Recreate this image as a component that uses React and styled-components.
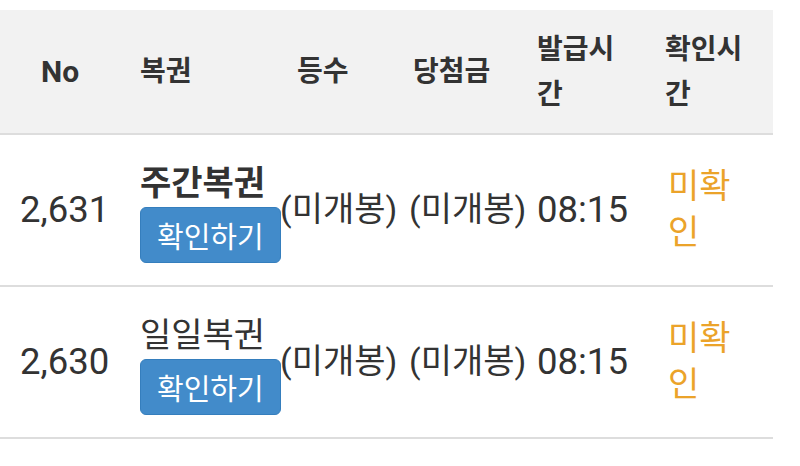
import React from "react";
import styled, { createGlobalStyle } from "styled-components";

const GlobalStyle = createGlobalStyle`
  body {
    margin: 0;
    padding-top: 10px;
    background: #fff;
    color: #333;
    font-family: Roboto, "Noto Sans CJK KR", sans-serif;
  }
`;

const COLUMNS = "140px 140px 129px 128px 128px 108px";

const Table = styled.div`
  width: 773px;
`;

const HeadRow = styled.div`
  display: grid;
  grid-template-columns: ${COLUMNS};
  height: 123px;
  background: #f2f2f2;
  border-bottom: 2px solid #ddd;
`;

const HeadCell = styled.div`
  display: flex;
  align-items: center;
  padding-left: ${(p) => p.$indent || 0}px;
  padding-right: 28px;
  font-size: ${(p) => (p.$latin ? 30 : 28)}px;
  font-weight: 700;
  line-height: 45px;
`;

const BodyRow = styled.div`
  display: grid;
  grid-template-columns: ${COLUMNS};
  height: 150px;
  border-bottom: 2px solid #ddd;
`;

const BodyCell = styled.div`
  display: flex;
  flex-direction: column;
  justify-content: center;
  align-items: flex-start;
  padding-left: ${(p) => p.$indent || 0}px;
  font-size: ${(p) => (p.$num ? 36.5 : 34)}px;
  line-height: 45.7px;
  white-space: ${(p) => (p.$nowrap ? "nowrap" : "normal")};
`;

const StatusCell = styled(BodyCell)`
  padding-right: 24px;
  color: #eba32a;
`;

const TicketCell = styled(BodyCell)`
  padding-top: 4px;
`;

const TicketName = styled.span`
  font-weight: ${(p) => (p.$strong ? 700 : 400)};
  white-space: nowrap;
`;

const CheckButton = styled.button`
  display: block;
  height: 56px;
  padding: 0 16px;
  border: 1px solid #357ebd;
  border-radius: 6px;
  background: #428bca;
  color: #fff;
  font-family: "Noto Sans CJK KR", sans-serif;
  font-size: 29px;
  line-height: 54px;
  white-space: nowrap;
  cursor: pointer;
`;

const rows = [
  { no: "2,631", name: "주간복권", strong: true, rank: "(미개봉)", prize: "(미개봉)", issued: "08:15", status: "미확인" },
  { no: "2,630", name: "일일복권", strong: false, rank: "(미개봉)", prize: "(미개봉)", issued: "08:15", status: "미확인" },
];

export default function App() {
  return (
    <>
      <GlobalStyle />
      <Table>
        <HeadRow>
          <HeadCell $indent={41} $latin>No</HeadCell>
          <HeadCell>복권</HeadCell>
          <HeadCell $indent={17}>등수</HeadCell>
          <HeadCell $indent={4}>당첨금</HeadCell>
          <HeadCell>발급시간</HeadCell>
          <HeadCell>확인시간</HeadCell>
        </HeadRow>
        {rows.map((r) => (
          <BodyRow key={r.no}>
            <BodyCell $indent={20} $num>{r.no}</BodyCell>
            <TicketCell>
              <TicketName $strong={r.strong}>{r.name}</TicketName>
              <CheckButton>확인하기</CheckButton>
            </TicketCell>
            <BodyCell $nowrap>{r.rank}</BodyCell>
            <BodyCell $nowrap>{r.prize}</BodyCell>
            <BodyCell $num>{r.issued}</BodyCell>
            <StatusCell $indent={3}>{r.status}</StatusCell>
          </BodyRow>
        ))}
      </Table>
    </>
  );
}
